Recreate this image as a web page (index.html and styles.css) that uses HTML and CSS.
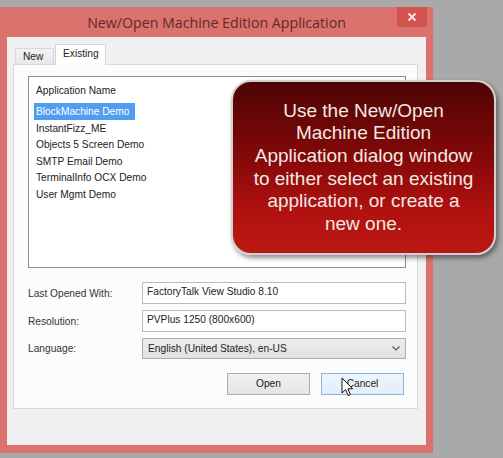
FILE: index.html
```html
<!DOCTYPE html>
<html>
	<head>
		<meta charset="UTF-8">
		<title>New/Open Machine Edition Application</title>
		<link rel="stylesheet" href="styles.css">
	</head>
	<body>
		<div class="screen">
			<div class="window">
				<div class="titlebar">
					<span class="title">New/Open Machine Edition Application</span>
					<a href="javascript:;" class="close">
						<svg width="10" height="10" viewBox="0 0 10 10"><path d="M1.5 1.5L8.5 8.5M8.5 1.5L1.5 8.5" stroke="#fde8e6" stroke-width="1.8"/></svg>
					</a>
				</div>
				<div class="client">
					<div class="tabs">
						<div class="tab">New</div>
						<div class="tab active">Existing</div>
					</div>
					<div class="panel">
						<div class="list">
							<div class="list-head">Application Name</div>
							<div class="item"><span class="selected">BlockMachine Demo</span></div>
							<div class="item"><span>InstantFizz_ME</span></div>
							<div class="item"><span>Objects 5 Screen Demo</span></div>
							<div class="item"><span>SMTP Email Demo</span></div>
							<div class="item"><span>TerminalInfo OCX Demo</span></div>
							<div class="item"><span>User Mgmt Demo</span></div>
						</div>
						<div class="fields">
							<label>Last Opened With:</label>
							<div class="input">FactoryTalk View Studio 8.10</div>
							<label>Resolution:</label>
							<div class="input">PVPlus 1250 (800x600)</div>
							<label>Language:</label>
							<div class="select">
								<span>English (United States), en-US</span>
								<svg width="8" height="5" viewBox="0 0 8 5"><path d="M0.5 0.5L4 4L7.5 0.5" fill="none" stroke="#555" stroke-width="1.2"/></svg>
							</div>
						</div>
						<div class="actions">
							<a href="javascript:;" class="button">Open</a>
							<a href="javascript:;" class="button hover">Cancel
								<svg class="pointer" width="13" height="20" viewBox="0 0 13 20"><path d="M1 1L1 16L4.6 12.6L7.2 18.6L9.4 17.6L6.9 11.8L11.6 11.8Z" fill="#fff" stroke="#111" stroke-width="1" stroke-linejoin="round"/></svg>
							</a>
						</div>
					</div>
				</div>
			</div>
			<div class="callout">
				<p>Use the New/Open<br>Machine Edition<br>Application dialog window<br>to either select an existing<br>application, or create a<br>new one.</p>
			</div>
		</div>
	</body>
</html>
```
FILE: styles.css
```css
*{
	margin:0px;
	padding:0px;
	box-sizing:border-box;
}
body{
	background:#a9a9a9;
	font-family:"Liberation Sans", Arial, sans-serif;
	font-size:10.2px;
	color:#222;
}
a{
	text-decoration:none;
	color:inherit;
}
.screen{
	position:relative;
	width:503px;
	height:458px;
	padding-top:7px;
}
.window{
	width:433px;
	height:446px;
	background:#dc726e;
	display:flex;
	flex-direction:column;
	padding-bottom:8px;
}
.titlebar{
	height:30px;
	display:grid;
	grid-template-columns:36px 1fr 36px;
	align-items:center;
}
.title{
	grid-column:2;
	text-align:center;
	font-family:"Open Sans", "Noto Sans", sans-serif;
	font-size:14.2px;
	color:#5a2c2a;
}
.close{
	grid-column:3;
	align-self:start;
	width:30px;
	height:20px;
	background:#d3534f;
	display:flex;
	align-items:center;
	justify-content:center;
}
.client{
	flex:1;
	margin:0 7px;
	background:#f0f0f0;
	padding:7px 0 0 6px;
}
.tabs{
	display:flex;
	align-items:flex-end;
	height:20px;
	margin-left:2px;
}
.tab{
	height:16px;
	line-height:15px;
	padding:0 7px;
	border:1px solid #d9d9d9;
	border-bottom:none;
	background:linear-gradient(#f2f2f2,#e8e8e8);
	width:39px;
}
.tab.active{
	position:relative;
	z-index:2;
	height:21px;
	margin-bottom:-1px;
	margin-left:1px;
	width:51px;
	line-height:18px;
	background:#fff;
	border-color:#d4d4d4;
}
.panel{
	width:405px;
	height:345px;
	border:1px solid #d9d9d9;
	background:#fcfcfc;
	padding:11px 11px 0 14px;
	display:flex;
	flex-direction:column;
}
.list{
	height:192px;
	border:1px solid #8a8e96;
	background:#fff;
	padding:6px 0 0 5px;
}
.list-head{
	padding-left:2px;
	line-height:16px;
	margin-bottom:4px;
}
.item{
	height:16.6px;
	line-height:17px;
}
.item span{
	display:inline-block;
	padding:0 2px;
	height:17px;
}
.item .selected{
	background:#4f9ef0;
	color:#fff;
	padding-right:6px;
}
.fields{
	display:grid;
	grid-template-columns:114px 1fr;
	grid-template-rows:22px 22px 21px;
	row-gap:6px;
	align-items:center;
	margin-top:14px;
}
.fields label{
	color:#333;
}
.input{
	height:100%;
	border:1px solid #b9bbc0;
	background:#fff;
	padding:0 4px;
	line-height:18px;
}
.select{
	height:100%;
	border:1px solid #acacac;
	background:linear-gradient(#ececec,#e2e2e2);
	padding:0 5px;
	display:flex;
	align-items:center;
	justify-content:space-between;
}
.actions{
	display:flex;
	justify-content:flex-end;
	gap:11px;
	margin:14px 2px 0 0;
}
.button{
	position:relative;
	width:83px;
	height:22px;
	border:1px solid #acacac;
	background:linear-gradient(#f0f0f0,#e5e5e5);
	text-align:center;
	line-height:20px;
}
.button.hover{
	border-color:#8cb6e2;
	background:linear-gradient(#eef5fc,#e1eefa);
}
.pointer{
	position:absolute;
	left:19px;
	top:3px;
}
.callout{
	position:absolute;
	left:231px;
	top:80px;
	width:265px;
	height:175px;
	border:2px solid #d6cfcf;
	border-radius:20px;
	background:linear-gradient(#4e0404 0%,#850909 45%,#b01210 75%,#bb1712 100%);
	box-shadow:2px 3px 5px rgba(0,0,0,0.45);
	display:flex;
	align-items:center;
	justify-content:center;
	padding:0 2px;
}
.callout p{
	font-family:"Liberation Sans", Arial, sans-serif;
	font-size:19px;
	line-height:22.6px;
	color:#f2e9e4;
	text-align:center;
	white-space:nowrap;
}
```
